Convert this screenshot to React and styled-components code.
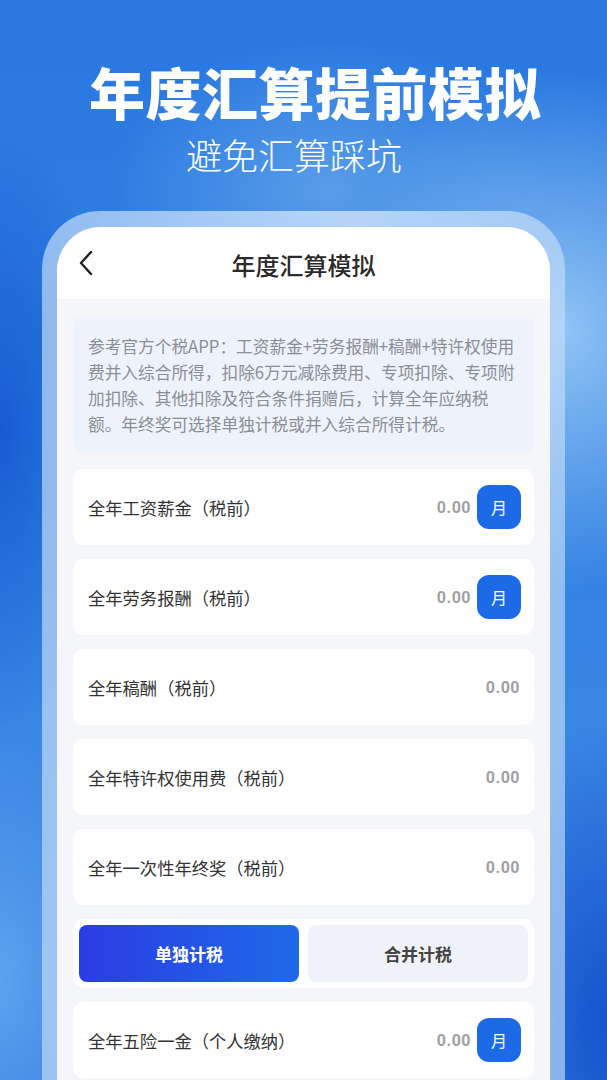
import React from 'react';
import styled, { createGlobalStyle } from 'styled-components';

const GlobalStyle = createGlobalStyle`
	html, body {
		margin: 0;
		padding: 0;
	}
	body {
		font-family: "Noto Sans CJK SC", "Noto Sans", sans-serif;
		overflow: hidden;
	}
`;

const Page = styled.div`
	width: 607px;
	height: 1080px;
	overflow: hidden;
	background:
		radial-gradient(ellipse 230px 260px at 560px 330px, rgba(150, 200, 245, 0.95), rgba(150, 200, 245, 0) 100%),
		radial-gradient(ellipse 220px 150px at 330px 190px, rgba(120, 180, 238, 0.6), rgba(120, 180, 238, 0) 100%),
		radial-gradient(ellipse 110px 300px at 0px 430px, rgba(22, 90, 210, 0.95), rgba(22, 90, 210, 0) 100%),
		radial-gradient(ellipse 130px 260px at 0px 980px, rgba(95, 165, 240, 0.95), rgba(95, 165, 240, 0) 100%),
		radial-gradient(ellipse 140px 300px at 607px 1020px, rgba(22, 85, 205, 1), rgba(22, 85, 205, 0) 100%),
		linear-gradient(180deg, #2878e0 0%, #3080e2 40%, #3a86e4 70%, #3378de 100%);
	display: flex;
	flex-direction: column;
	align-items: center;
`;

const Hero = styled.div`
	display: flex;
	flex-direction: column;
	align-items: center;
	padding-top: 55px;
	padding-left: 23px;
`;

const Title = styled.h1`
	margin: 0;
	color: #fff;
	font-size: 56px;
	font-weight: 900;
	line-height: 72px;
	letter-spacing: 0.5px;
`;

const Subtitle = styled.div`
	color: #fff;
	font-size: 36px;
	font-weight: 300;
	line-height: 44px;
	margin-top: 5px;
	margin-left: -42px;
`;

const Frame = styled.div`
	margin-top: 35px;
	width: 523px;
	flex: 1;
	box-sizing: border-box;
	padding: 16px 15px 0;
	border-radius: 58px 58px 0 0;
	background: linear-gradient(90deg, rgba(190, 218, 248, 0.7), rgba(215, 232, 252, 0.75) 60%, rgba(195, 220, 248, 0.65));
	display: flex;
`;

const Screen = styled.div`
	flex: 1;
	background: #f5f6fa;
	border-radius: 44px 44px 0 0;
	overflow: hidden;
	display: flex;
	flex-direction: column;
`;

const Header = styled.div`
	height: 72px;
	background: #fff;
	display: grid;
	grid-template-columns: 56px 1fr 56px;
	align-items: center;
`;

const Back = styled.div`
	display: flex;
	justify-content: center;
	padding-left: 2px;
`;

const HeaderTitle = styled.div`
	text-align: center;
	font-size: 24px;
	font-weight: 500;
	color: #2a2a2a;
	padding-top: 2px;
`;

const Body = styled.div`
	padding: 18px 16px 0;
	display: flex;
	flex-direction: column;
	gap: 14px;
`;

const Notice = styled.div`
	background: #eef3fb;
	border-radius: 8px;
	padding: 16px 14px 15px 15px;
	font-size: 16.7px;
	line-height: 26px;
	color: #8a8e96;
	margin-bottom: 3px;
`;

const Row = styled.div`
	height: 76px;
	background: #fff;
	border-radius: 10px;
	display: flex;
	align-items: center;
	padding: 0 13px 0 15px;
`;

const Label = styled.div`
	flex: 1;
	font-size: 17.3px;
	color: #333;
`;

const Value = styled.div`
	font-family: "Roboto", "Noto Sans", sans-serif;
	font-size: 16px;
	font-weight: 700;
	color: #a0a0a4;
	letter-spacing: 0.5px;
	margin-right: ${(p) => (p.$withUnit ? '6px' : '1px')};
`;

const UnitButton = styled.button`
	width: 44px;
	height: 44px;
	border: none;
	border-radius: 12px;
	background: #1d6ae6;
	color: #fff;
	font-family: inherit;
	font-size: 16px;
	padding: 0;
`;

const Toggle = styled.div`
	background: #fff;
	border-radius: 10px;
	padding: 6px;
	display: grid;
	grid-template-columns: 1fr 1fr;
	gap: 9px;
`;

const ToggleButton = styled.button`
	height: 57px;
	border: none;
	border-radius: 8px;
	font-family: inherit;
	font-size: 17px;
	font-weight: 700;
	background: ${(p) => (p.$active ? 'linear-gradient(90deg, #2b3ce2, #1f6ae9)' : '#eff2f8')};
	color: ${(p) => (p.$active ? '#fff' : '#444')};
`;

const rows = [
	{ label: '全年工资薪金（税前）', unit: true },
	{ label: '全年劳务报酬（税前）', unit: true },
	{ label: '全年稿酬（税前）', unit: false },
	{ label: '全年特许权使用费（税前）', unit: false },
	{ label: '全年一次性年终奖（税前）', unit: false },
];

const InputRow = ({ label, unit }) => (
	<Row>
		<Label>{label}</Label>
		<Value $withUnit={unit}>0.00</Value>
		{unit && <UnitButton>月</UnitButton>}
	</Row>
);

const App = () => {
	return (
		<>
			<GlobalStyle />
			<Page>
				<Hero>
					<Title>年度汇算提前模拟</Title>
					<Subtitle>避免汇算踩坑</Subtitle>
				</Hero>
				<Frame>
					<Screen>
						<Header>
							<Back>
								<svg width="16" height="26" viewBox="0 0 16 26" fill="none">
									<path d="M13 2 L3 13 L13 24" stroke="#222" strokeWidth="2.4" strokeLinecap="round" strokeLinejoin="round" />
								</svg>
							</Back>
							<HeaderTitle>年度汇算模拟</HeaderTitle>
							<div />
						</Header>
						<Body>
							<Notice>
								参考官方个税APP：工资薪金+劳务报酬+稿酬+特许权使用费并入综合所得，扣除6万元减除费用、专项扣除、专项附加扣除、其他扣除及符合条件捐赠后，计算全年应纳税额。年终奖可选择单独计税或并入综合所得计税。
							</Notice>
							{rows.map((r) => (
								<InputRow key={r.label} label={r.label} unit={r.unit} />
							))}
							<Toggle>
								<ToggleButton $active>单独计税</ToggleButton>
								<ToggleButton>合并计税</ToggleButton>
							</Toggle>
							<InputRow label="全年五险一金（个人缴纳）" unit />
						</Body>
					</Screen>
				</Frame>
			</Page>
		</>
	);
};

export default App;
